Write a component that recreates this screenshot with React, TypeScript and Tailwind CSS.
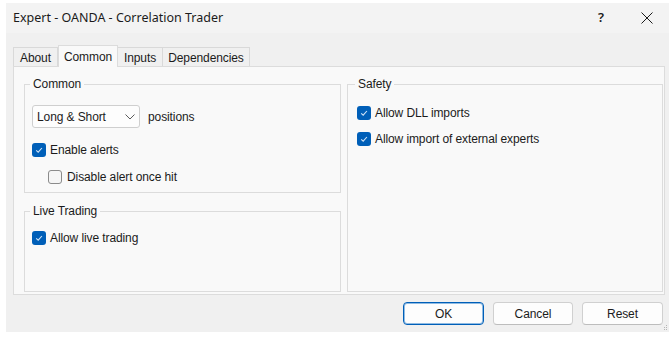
import type { ReactNode } from "react";

const Check = ({ checked }: { checked: boolean }) =>
  checked ? (
    <span className="flex h-[14px] w-[14px] shrink-0 items-center justify-center rounded-[3px] bg-[#005fb8]">
      <svg width="10" height="10" viewBox="0 0 10 10">
        <path d="M2.2 5.3 L4.2 7.2 L7.9 3" fill="none" stroke="#cfe3f6" strokeWidth="1.1" />
      </svg>
    </span>
  ) : (
    <span className="h-[14px] w-[14px] shrink-0 rounded-[3px] border border-[#8b8b8b] bg-[#f5f5f5]" />
  );

const CheckRow = ({ checked, label, className = "" }: { checked: boolean; label: string; className?: string }) => (
  <div className={`flex h-4 items-center gap-[4px] ${className}`}>
    <Check checked={checked} />
    <span>{label}</span>
  </div>
);

const Group = ({ title, className = "", children }: { title: string; className?: string; children: ReactNode }) => (
  <fieldset className={`border border-[#dcdcdc] px-[7px] ${className}`}>
    <legend className="-ml-[2px] px-[3px] leading-4">{title}</legend>
    {children}
  </fieldset>
);

const tabs = ["About", "Common", "Inputs", "Dependencies"];

export default function App() {
  return (
    <div className="h-[337px] w-[672px] bg-white pl-[6px] pt-[3px] font-['Liberation_Sans',Arial,sans-serif] text-[12px] tracking-[-0.1px] text-[#1b1b1b]">
      <div className="flex h-[329px] w-[663px] flex-col bg-[#f0f0f0]">
        {/* title bar */}
        <div className="flex h-[30px] items-center bg-[#f3f3f3] pl-[7px]">
          <span className="font-['Noto_Sans',sans-serif] text-[12.5px] tracking-normal">Expert - OANDA - Correlation Trader</span>
          <span className="ml-auto mr-[37px] font-['Noto_Sans',sans-serif] text-[13px] font-semibold">?</span>
          <svg width="12" height="12" viewBox="0 0 12 12" className="mr-[16px]">
            <path d="M0.5 0.5 L11.5 11.5 M11.5 0.5 L0.5 11.5" stroke="#1b1b1b" strokeWidth="1" />
          </svg>
        </div>

        {/* tabs */}
        <div className="ml-[7px] mt-[12px] flex h-[21px] items-end">
          {tabs.map((t) =>
            t === "Common" ? (
              <div
                key={t}
                className="relative z-10 -mb-px flex h-[22px] w-[60px] items-start justify-center border border-b-0 border-[#dcdcdc] bg-[#f9f9f9] pt-[2px]"
              >
                {t}
              </div>
            ) : (
              <div
                key={t}
                className={`flex h-[19px] items-center justify-center border border-b-0 border-[#d9d9d9] bg-[#f0f0f0] pt-px ${
                  t === "About" ? "w-[45px]" : t === "Inputs" ? "w-[45px] border-l-0" : "w-[87px] border-l-0"
                }`}
              >
                {t}
              </div>
            )
          )}
        </div>

        {/* panel */}
        <div className="ml-[7px] grid h-[229px] w-[652px] grid-cols-[317px_316px] gap-[6px] border border-[#dcdcdc] bg-[#f9f9f9] pb-[2px] pl-[10px] pt-[9px]">
          <div className="flex flex-col gap-[10px]">
            <Group title="Common" className="h-[117px]">
              <div className="mt-[13px] flex items-center gap-[8px]">
                <div className="flex h-[23px] w-[108px] items-center justify-between rounded-[3px] border border-[#cfcfcf] bg-[#fdfdfd] pl-[4px] pr-[4px]">
                  <span>Long &amp; Short</span>
                  <svg width="10" height="6" viewBox="0 0 10 6">
                    <path d="M0.5 0.5 L5 5 L9.5 0.5" fill="none" stroke="#5c5c5c" strokeWidth="1" />
                  </svg>
                </div>
                <span>positions</span>
              </div>
              <CheckRow checked label="Enable alerts" className="mt-[14px]" />
              <CheckRow checked={false} label="Disable alert once hit" className="ml-[16px] mt-[11px] gap-[5px]" />
            </Group>
            <Group title="Live Trading" className="flex-1">
              <CheckRow checked label="Allow live trading" className="mt-[11px]" />
            </Group>
          </div>
          <Group title="Safety" className="h-full px-[9px]">
            <CheckRow checked label="Allow DLL imports" className="mt-[13px]" />
            <CheckRow checked label="Allow import of external experts" className="mt-[10px]" />
          </Group>
        </div>

        {/* buttons */}
        <div className="relative mt-[7px] flex justify-end gap-[9px] pr-[6px]">
          <button className="h-[23px] w-[81px] rounded-[4px] border border-[#005fb8] bg-[#fdfdfd] shadow-[inset_0_0_0_1px_#8fbbe3]">
            OK
          </button>
          <button className="h-[23px] w-[80px] rounded-[4px] border border-[#d0d0d0] border-b-[#bdbdbd] bg-[#fdfdfd]">
            Cancel
          </button>
          <button className="h-[23px] w-[81px] rounded-[4px] border border-[#d0d0d0] border-b-[#bdbdbd] bg-[#fdfdfd]">
            Reset
          </button>
          <svg width="5" height="6" viewBox="0 0 5 6" className="absolute bottom-[-6px] right-[1px]">
            <g fill="#b5b5b5">
              <rect x="3" y="0" width="1" height="1" />
              <rect x="1" y="2" width="1" height="1" />
              <rect x="3" y="2" width="1" height="1" />
              <rect x="1" y="4" width="1" height="1" />
              <rect x="3" y="4" width="1" height="1" />
            </g>
          </svg>
        </div>
      </div>
    </div>
  );
}
